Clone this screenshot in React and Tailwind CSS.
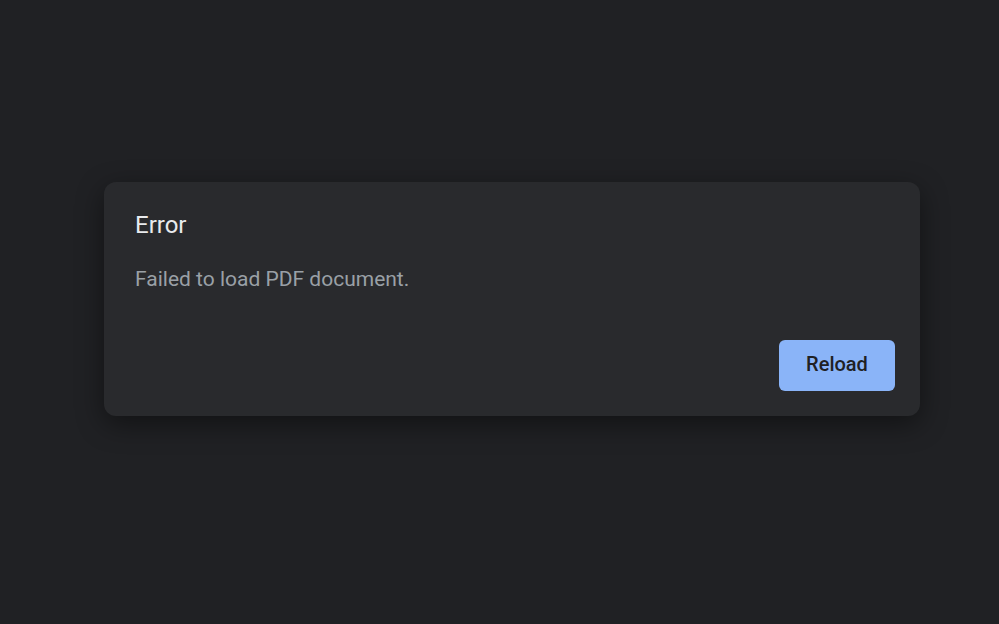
export default function App() {
  return (
    <div className="min-h-[624px] w-full bg-[#202124] pt-[182px] pl-[104px] font-['Roboto',sans-serif]">
      <div className="w-[816px] h-[234px] rounded-[12px] bg-[#292a2d] shadow-[0_8px_28px_rgba(0,0,0,0.45)] flex flex-col pl-[31px] pr-[25px] pb-[25px] pt-[27px]">
        <h1 className="text-[24px] leading-[32px] text-[#e8eaed]">Error</h1>
        <p className="mt-[24px] text-[21px] leading-[28px] text-[#9aa0a6]">Failed to load PDF document.</p>
        <div className="mt-auto flex justify-end">
          <button className="w-[116px] h-[51px] rounded-[6px] bg-[#8ab4f8] text-[#202124] text-[20px] leading-[24px] font-medium pb-[3px]">
            Reload
          </button>
        </div>
      </div>
    </div>
  );
}
